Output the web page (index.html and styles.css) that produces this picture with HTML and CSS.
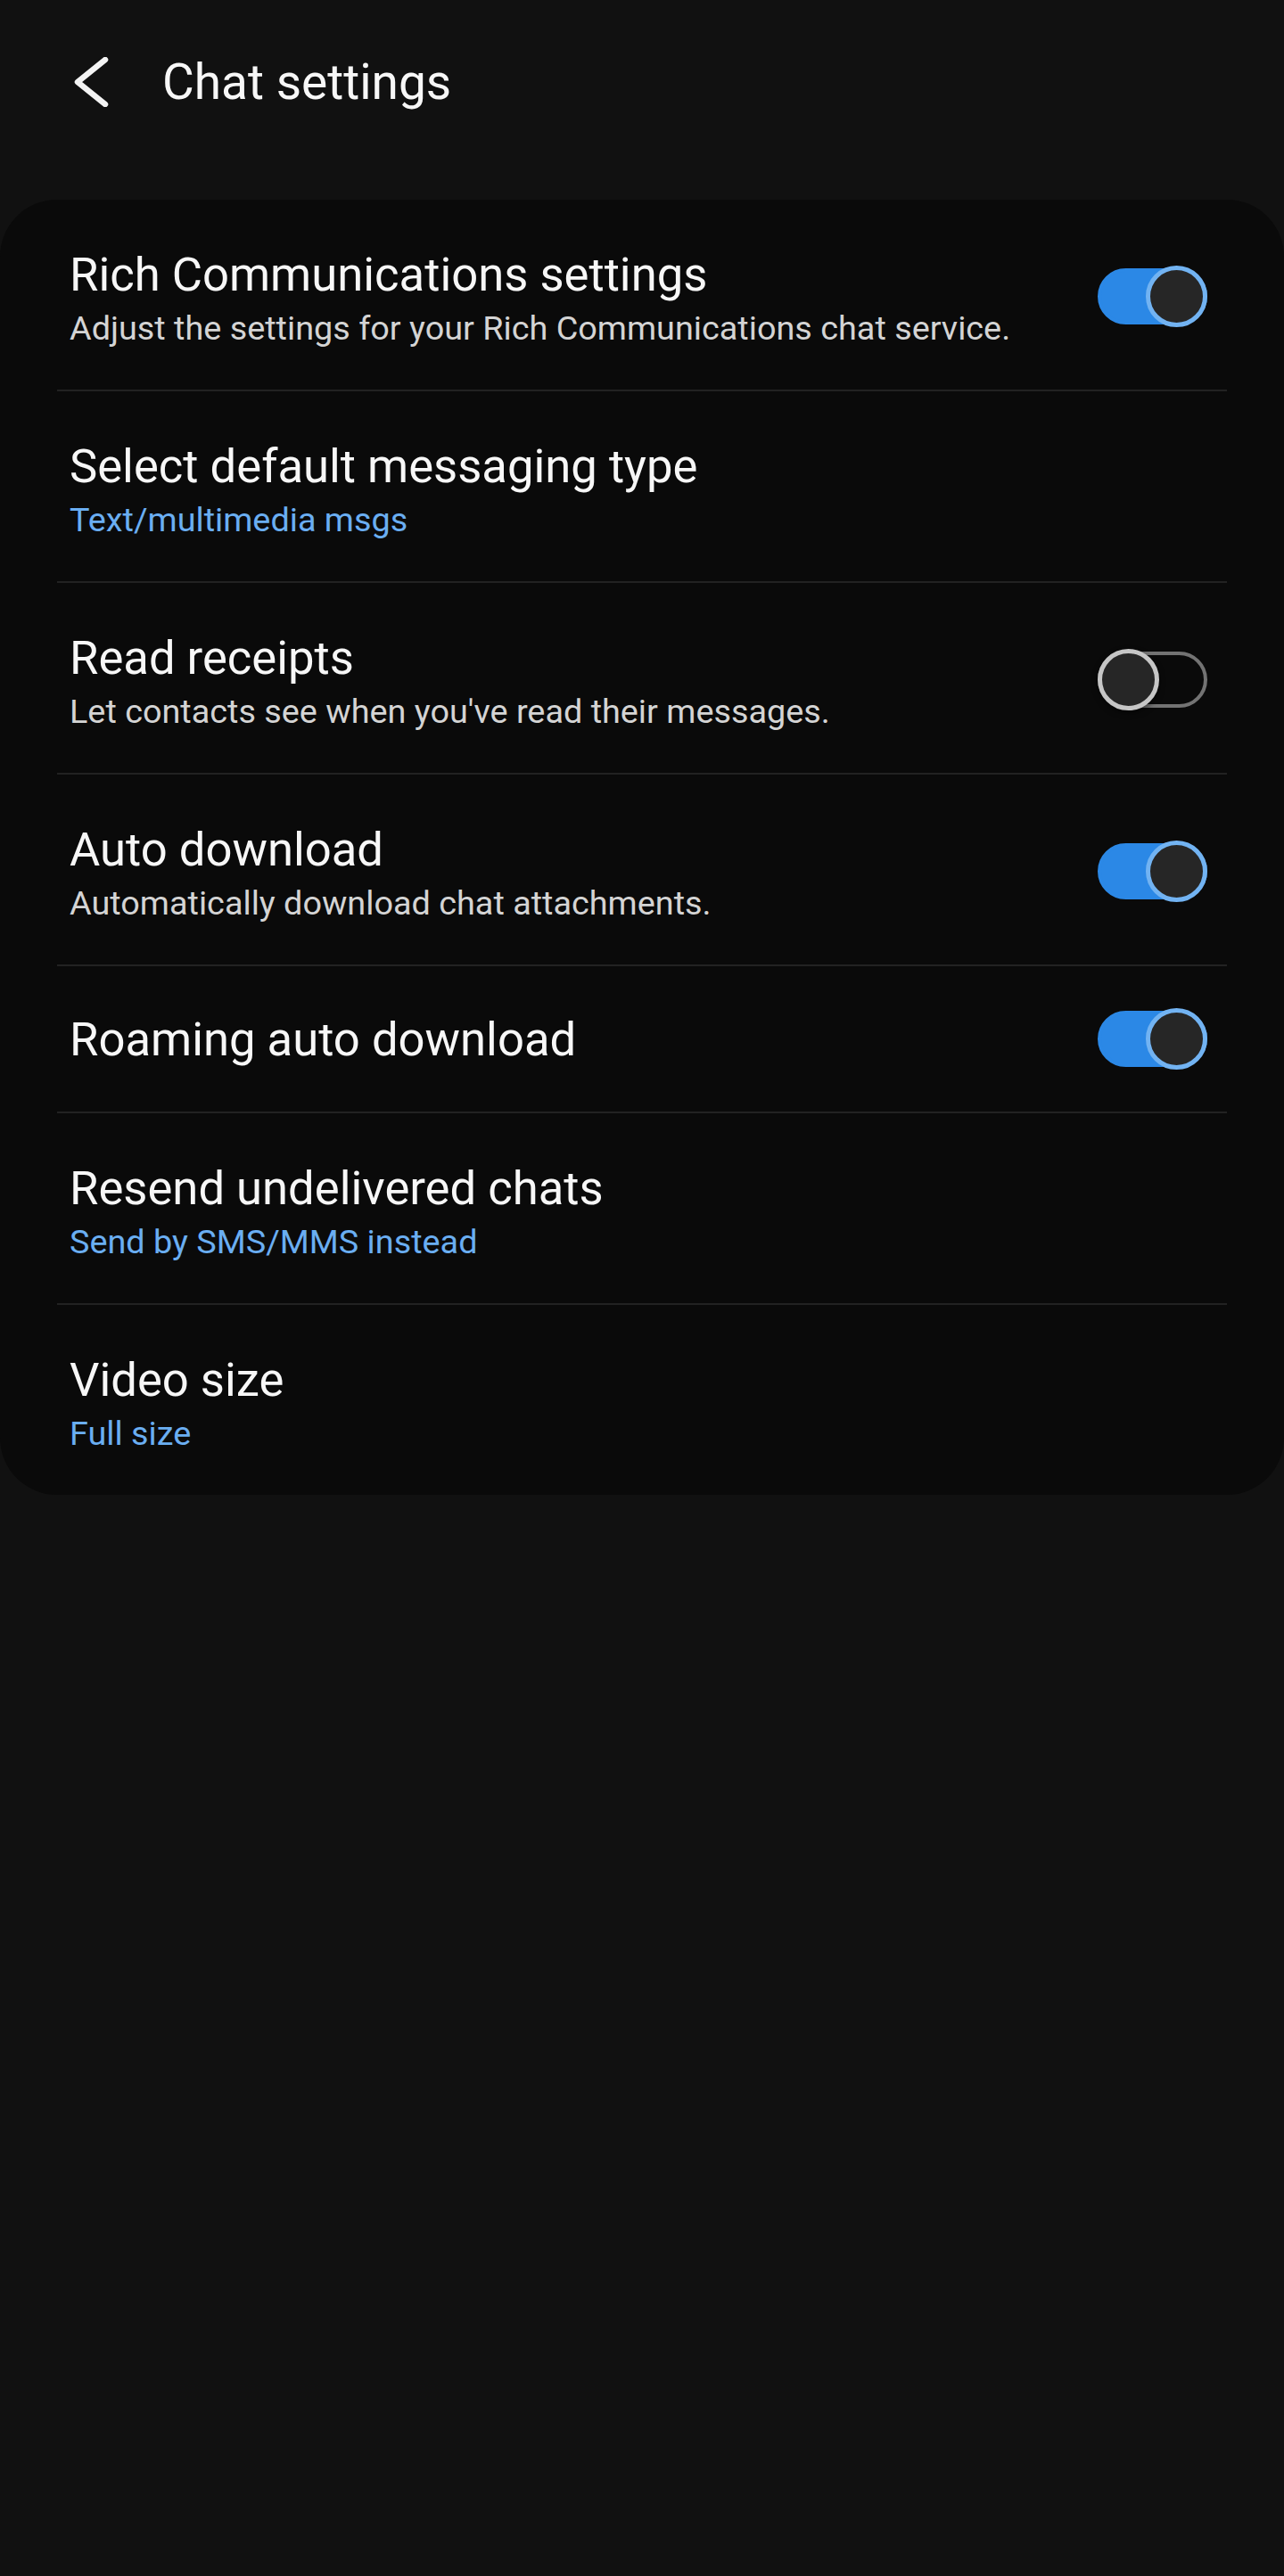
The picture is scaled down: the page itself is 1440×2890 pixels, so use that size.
FILE: index.html
```html
<!DOCTYPE html>
<html lang="en">
  <head>
    <meta charset="UTF-8" />
    <title>Chat settings</title>
    <link rel="stylesheet" href="styles.css">
  </head>
  <body>
    <header class="topbar">
      <button class="back" aria-label="Back">
        <svg width="44" height="56" viewBox="0 0 44 56">
          <polyline points="38,3 7,28 38,53" fill="none" stroke="#f4f4f4" stroke-width="6.5" stroke-linecap="round" stroke-linejoin="round" />
        </svg>
      </button>
      <h1>Chat settings</h1>
    </header>

    <div class="card">
      <div class="row">
        <div class="text">
          <div class="title">Rich Communications settings</div>
          <div class="sub">Adjust the settings for your Rich Communications chat service.</div>
        </div>
        <span class="switch on"><span class="knob"></span></span>
      </div>
      <div class="row">
        <div class="text">
          <div class="title">Select default messaging type</div>
          <div class="sub value">Text/multimedia msgs</div>
        </div>
      </div>
      <div class="row">
        <div class="text">
          <div class="title">Read receipts</div>
          <div class="sub">Let contacts see when you've read their messages.</div>
        </div>
        <span class="switch"><span class="knob"></span></span>
      </div>
      <div class="row">
        <div class="text">
          <div class="title">Auto download</div>
          <div class="sub">Automatically download chat attachments.</div>
        </div>
        <span class="switch on"><span class="knob"></span></span>
      </div>
      <div class="row single">
        <div class="text">
          <div class="title">Roaming auto download</div>
        </div>
        <span class="switch on"><span class="knob"></span></span>
      </div>
      <div class="row">
        <div class="text">
          <div class="title">Resend undelivered chats</div>
          <div class="sub value">Send by SMS/MMS instead</div>
        </div>
      </div>
      <div class="row">
        <div class="text">
          <div class="title">Video size</div>
          <div class="sub value">Full size</div>
        </div>
      </div>
    </div>
  </body>
</html>
```

FILE: styles.css
```css
html {
  background: #111111;
}
body {
  margin: 0;
  min-height: 2890px;
  background: #111111;
  font-family: Roboto, "Noto Sans", sans-serif;
  color: #f7f7f7;
}
.topbar {
  height: 184px;
  display: flex;
  align-items: center;
  padding-left: 80px;
}
.back {
  background: none;
  border: none;
  padding: 0;
  width: 44px;
  height: 56px;
  display: flex;
}
.topbar h1 {
  margin: 0 0 0 58px;
  font-size: 55px;
  font-weight: 400;
  color: #f7f7f7;
}
.card {
  margin-top: 40px;
  background: #0a0a0a;
  border-radius: 64px;
  padding: 0 64px;
}
.row {
  display: flex;
  align-items: center;
  padding: 53px 22px 42px 14px;
  border-bottom: 2px solid #222222;
}
.row:last-child {
  border-bottom: none;
}
.row.single {
  padding-top: 50px;
  padding-bottom: 50px;
}
.text {
  flex: 1;
}
.title {
  font-size: 52.6px;
  line-height: 62px;
  color: #f7f7f7;
}
.sub {
  margin-top: 2px;
  font-size: 37.8px;
  line-height: 54px;
  color: #d4d4d4;
}
.sub.value {
  color: #6aaef2;
}
.switch {
  position: relative;
  width: 123px;
  height: 63px;
  box-sizing: border-box;
  border-radius: 32px;
  border: 4px solid #737373;
  margin-top: -8px;
}
.switch.on {
  background: #2b88e6;
  border-color: #2b88e6;
}
.row.single .switch {
  margin-top: 0;
}
.knob {
  position: absolute;
  top: -7px;
  left: -4px;
  width: 69px;
  height: 69px;
  box-sizing: border-box;
  border-radius: 50%;
  background: #262626;
  border: 5px solid #c6c6c6;
  box-shadow: 0 3px 6px rgba(0, 0, 0, 0.5);
}
.switch.on .knob {
  left: auto;
  right: -4px;
  border-color: #72b3f2;
  box-shadow: none;
}
```
